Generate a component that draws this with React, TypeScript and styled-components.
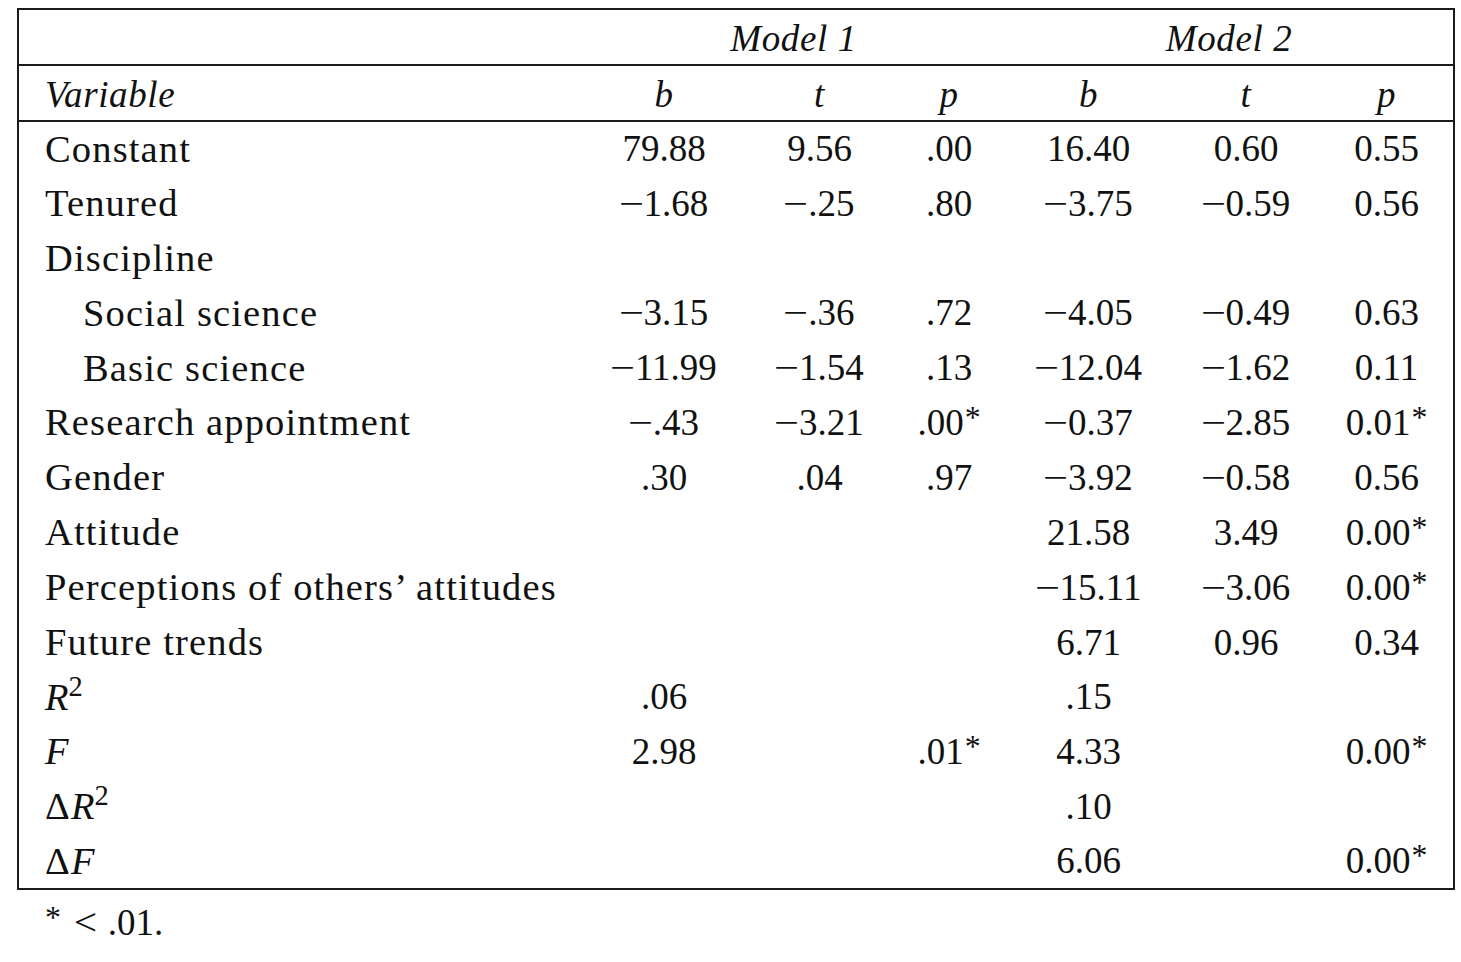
import React from 'react';
import styled, { createGlobalStyle } from 'styled-components';

const Global = createGlobalStyle`
  html, body { margin: 0; padding: 0; background: #ffffff; }
  body { font-family: "Liberation Serif", "Times New Roman", serif; color: #111111; }
`;

const Page = styled.main`
  padding: 8px 0 0 17px;
`;

const Table = styled.table`
  border-collapse: collapse;
  table-layout: fixed;
  width: 1436px;
  border: 2px solid #1c1c1c;
  font-size: 37px;
  line-height: 1;
`;

const HeadRow = styled.tr`
  height: 56px;
  border-bottom: 2px solid #1c1c1c;
`;

const BodyRow = styled.tr`
  height: 54.85px;
`;

const HeadCell = styled.th<{ $align?: 'left' | 'center' }>`
  font-weight: normal;
  font-style: italic;
  text-align: ${(p) => p.$align ?? 'center'};
  padding: 2px 0 0 ${(p) => (p.$align === 'left' ? '26px' : '0')};
  vertical-align: middle;
  letter-spacing: 0.6px;
`;

const LabelCell = styled.td<{ $indent?: boolean }>`
  padding: 0 0 0 ${(p) => (p.$indent ? '64px' : '26px')};
  vertical-align: middle;
  font-size: 38.5px;
  letter-spacing: 1.15px;
  white-space: nowrap;
`;

const NumCell = styled.td`
  text-align: center;
  vertical-align: middle;
  padding: 0;
  white-space: nowrap;
`;

const Minus = styled.span`
  display: inline-block;
  transform: scaleX(1.2);
  margin: 0 2px 0 1px;
`;

const Sup = styled.sup`
  font-size: 0.74em;
  vertical-align: 0.48em;
  line-height: 0;
  letter-spacing: 0;
`;

const Star = styled.sup`
  font-size: 0.86em;
  vertical-align: 0.22em;
  line-height: 0;
  padding-left: 1px;
`;

const Math = styled.span`
  font-style: italic;
  letter-spacing: 0;
`;

const Footnote = styled.p`
  margin: 14px 0 0 27px;
  font-size: 37px;
  line-height: 1;
`;

const Lt = styled.span`
  display: inline-block;
  padding: 0 12px 0 14px;
  transform: scaleX(1.12);
`;

type Row = { label: React.ReactNode; indent?: boolean; v: string[] };

const M = '\u2212';

const rows: Row[] = [
  { label: 'Constant', v: ['79.88', '9.56', '.00', '16.40', '0.60', '0.55'] },
  { label: 'Tenured', v: [`${M}1.68`, `${M}.25`, '.80', `${M}3.75`, `${M}0.59`, '0.56'] },
  { label: 'Discipline', v: ['', '', '', '', '', ''] },
  { label: 'Social science', indent: true, v: [`${M}3.15`, `${M}.36`, '.72', `${M}4.05`, `${M}0.49`, '0.63'] },
  { label: 'Basic science', indent: true, v: [`${M}11.99`, `${M}1.54`, '.13', `${M}12.04`, `${M}1.62`, '0.11'] },
  { label: 'Research appointment', v: [`${M}.43`, `${M}3.21`, '.00*', `${M}0.37`, `${M}2.85`, '0.01*'] },
  { label: 'Gender', v: ['.30', '.04', '.97', `${M}3.92`, `${M}0.58`, '0.56'] },
  { label: 'Attitude', v: ['', '', '', '21.58', '3.49', '0.00*'] },
  { label: 'Perceptions of others\u2019 attitudes', v: ['', '', '', `${M}15.11`, `${M}3.06`, '0.00*'] },
  { label: 'Future trends', v: ['', '', '', '6.71', '0.96', '0.34'] },
  { label: <><Math>R</Math><Sup>2</Sup></>, v: ['.06', '', '', '.15', '', ''] },
  { label: <Math>F</Math>, v: ['2.98', '', '.01*', '4.33', '', '0.00*'] },
  { label: <>&Delta;<Math>R</Math><Sup>2</Sup></>, v: ['', '', '', '.10', '', ''] },
  { label: <>&Delta;<Math>F</Math></>, v: ['', '', '', '6.06', '', '0.00*'] },
];

const widths = [564, 164, 147, 112, 167, 148, 134];

function Value({ text }: { text: string }) {
  let body = text;
  let star = false;
  if (body.endsWith('*')) {
    star = true;
    body = body.slice(0, -1);
  }
  const neg = body.startsWith(M);
  if (neg) body = body.slice(1);
  return (
    <>
      {neg && <Minus>{M}</Minus>}
      {body}
      {star && <Star>*</Star>}
    </>
  );
}

export default function App() {
  return (
    <Page>
      <Global />
      <Table>
        <colgroup>
          {widths.map((w, i) => (
            <col key={i} style={{ width: `${w}px` }} />
          ))}
        </colgroup>
        <thead>
          <HeadRow>
            <HeadCell $align="left" />
            <HeadCell colSpan={3}>Model 1</HeadCell>
            <HeadCell colSpan={3}>Model 2</HeadCell>
          </HeadRow>
          <HeadRow>
            <HeadCell $align="left">Variable</HeadCell>
            <HeadCell>b</HeadCell>
            <HeadCell>t</HeadCell>
            <HeadCell>p</HeadCell>
            <HeadCell>b</HeadCell>
            <HeadCell>t</HeadCell>
            <HeadCell>p</HeadCell>
          </HeadRow>
        </thead>
        <tbody>
          {rows.map((r, i) => (
            <BodyRow key={i}>
              <LabelCell $indent={r.indent}>{r.label}</LabelCell>
              {r.v.map((v, j) => (
                <NumCell key={j}>
                  <Value text={v} />
                </NumCell>
              ))}
            </BodyRow>
          ))}
        </tbody>
      </Table>
      <Footnote>
        <Star>*</Star>
        <Lt>&lt;</Lt>.01.
      </Footnote>
    </Page>
  );
}
